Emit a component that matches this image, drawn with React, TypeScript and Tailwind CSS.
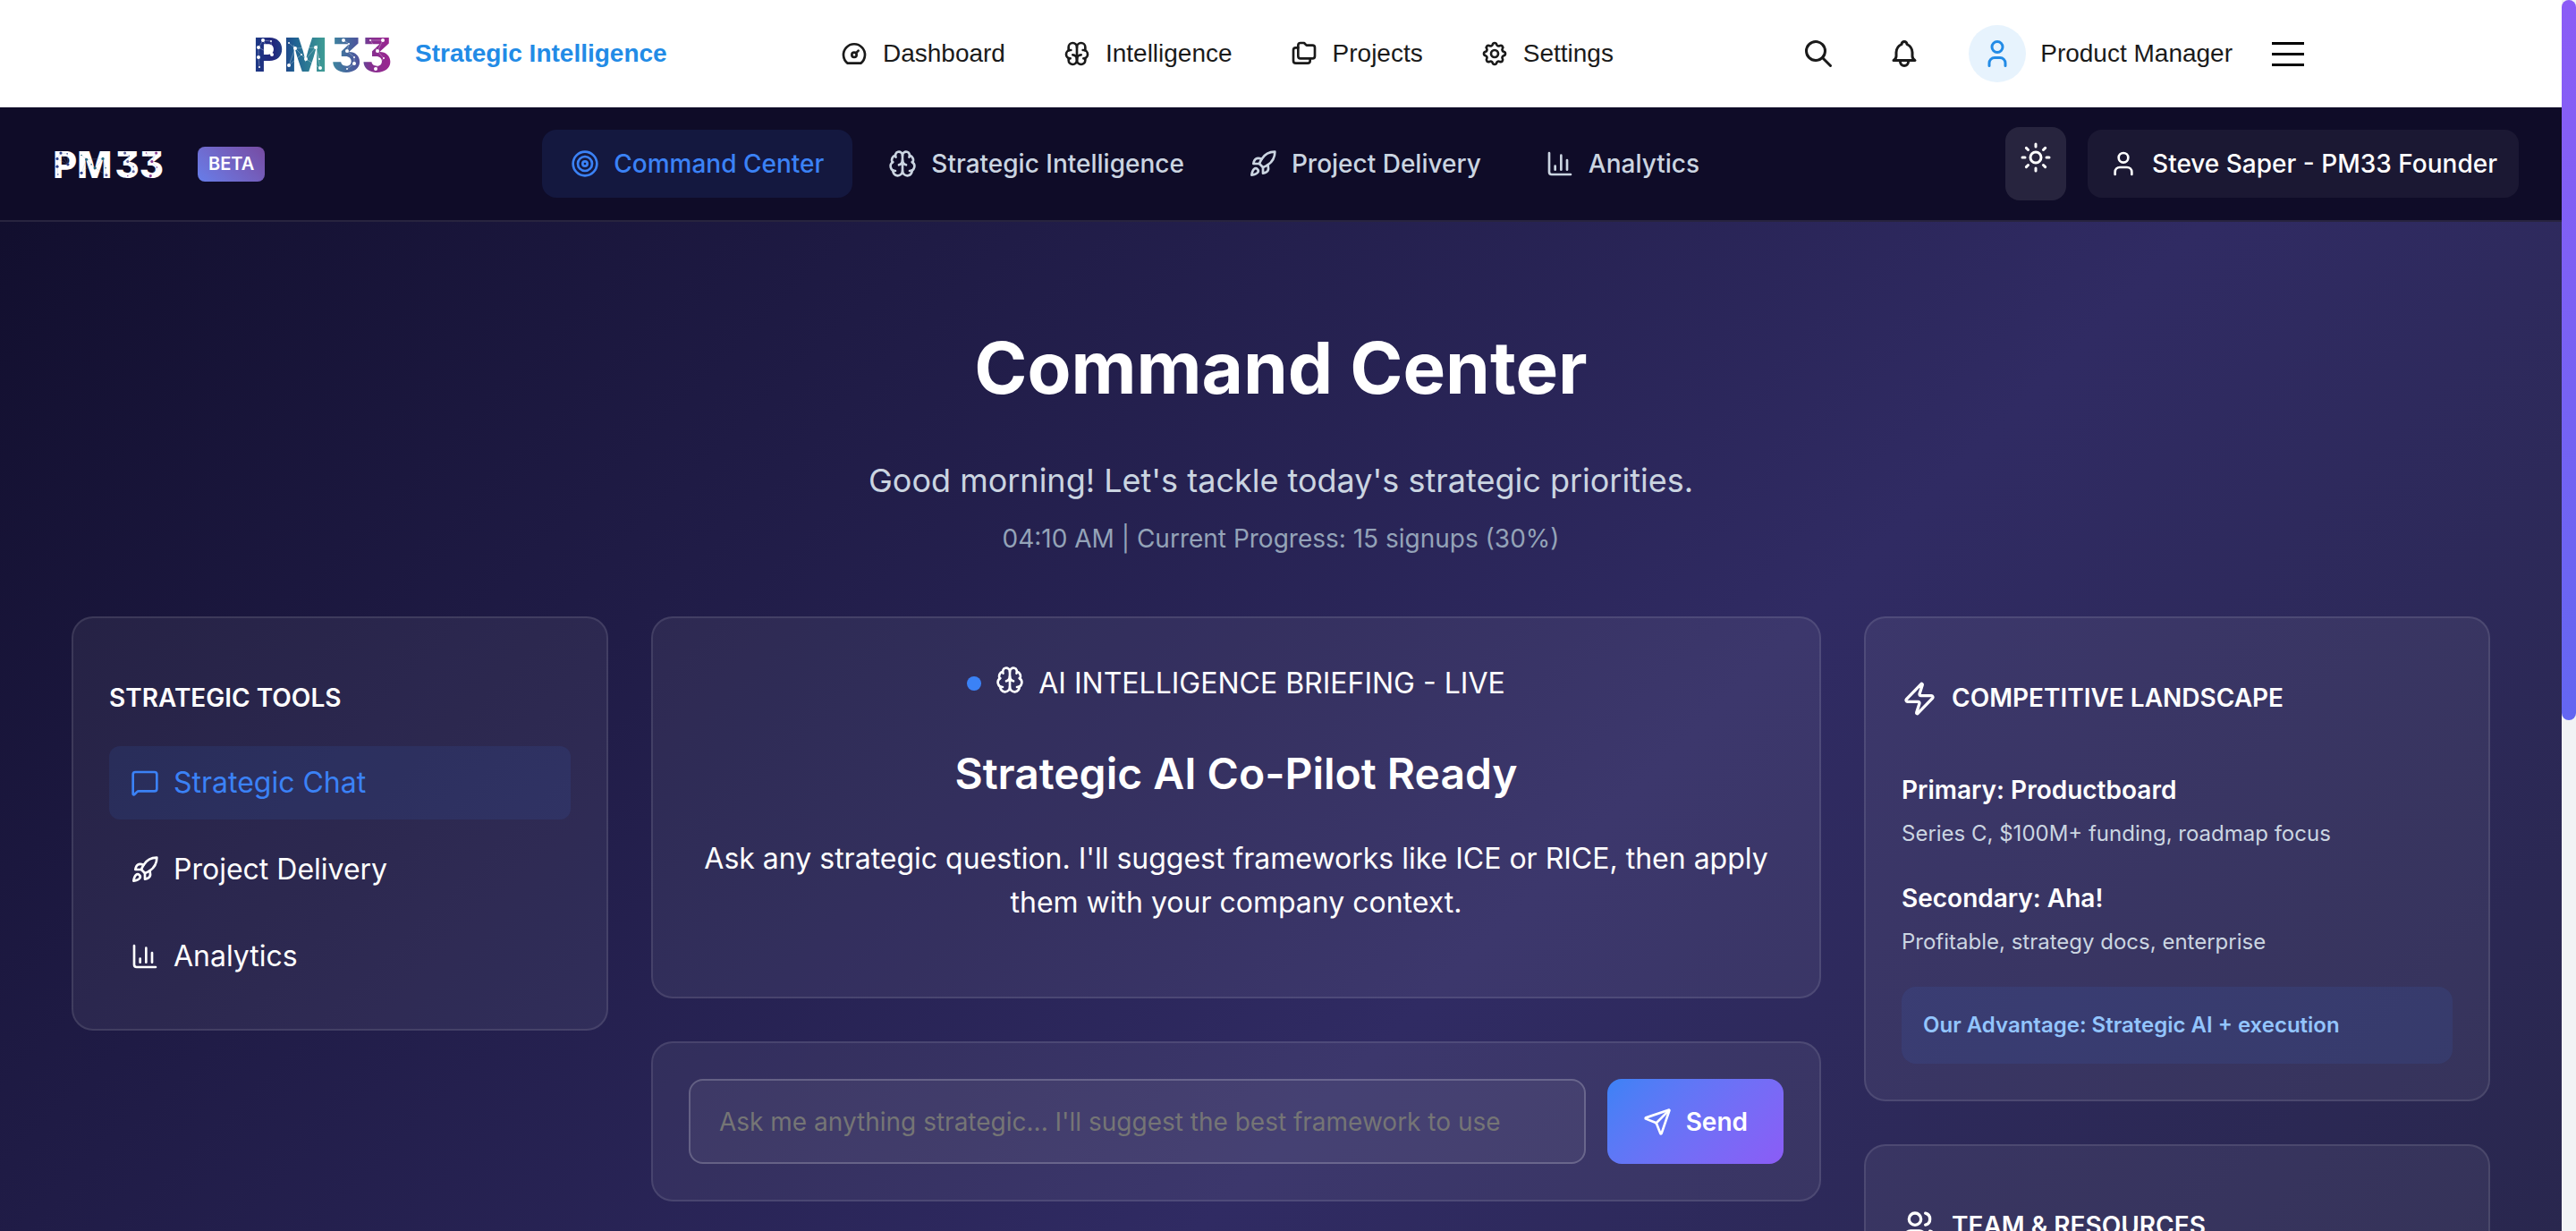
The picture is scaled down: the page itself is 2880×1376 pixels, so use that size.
import { TbBell, TbBrain, TbDashboard, TbFolders, TbSearch, TbSettings, TbUser } from "react-icons/tb";
import { Brain, ChartColumn, MessageSquare, Rocket, Send, Sun, Target, User, Users, Zap } from "lucide-react";

type Palette = { id: string; stops: [string, string][]; line: string; dots: string[] };

const brandPalette: Palette = {
  id: "brand",
  stops: [["0", "#1c3a86"], ["0.14", "#22267c"], ["0.3", "#1f6193"], ["0.52", "#3f9c95"], ["0.6", "#3f7f9f"], ["0.76", "#4c559c"], ["0.86", "#85308f"], ["1", "#9b2590"]],
  line: "#ffffff",
  dots: ["#ffffff"],
};

const whitePalette: Palette = {
  id: "white",
  stops: [["0", "#ffffff"], ["1", "#ffffff"]],
  line: "#8fa3c4",
  dots: ["#2b3f8c", "#22687f", "#5a5f9c", "#8a3a94"],
};

const nodes: [number, number, number][] = [
  [10, 10, 2], [5, 18, 2], [19, 11, 1], [20, 26, 2], [5, 29, 2], [6, 40, 1], [39, 38, 2], [39, 13, 1],
  [46, 19, 2], [53, 26, 1], [58, 31, 2], [69, 18, 2], [73, 31, 1], [74, 41, 2], [100, 10, 2], [106, 14, 1],
  [104, 22, 2], [112, 29, 1], [112, 36, 2], [104, 42, 1], [130, 10, 1], [144, 10, 2], [138, 22, 2], [145, 30, 1], [136, 42, 2],
];

const links: [number, number][] = [
  [0, 1], [0, 2], [1, 4], [1, 3], [4, 5], [2, 3], [0, 3], [6, 8], [7, 8], [8, 9], [6, 9], [9, 10], [10, 11], [11, 12],
  [11, 13], [10, 13], [8, 11], [14, 15], [15, 16], [16, 17], [17, 18], [18, 19], [20, 21], [21, 22], [22, 23], [23, 24], [20, 22],
];

function Logo({ palette, className }: { palette: Palette; className: string }) {
  return (
    <svg viewBox="0 0 152 50" className={`overflow-visible ${className}`} role="img" aria-label="PM 33">
      <defs>
        <linearGradient id={palette.id} gradientUnits="userSpaceOnUse" x1="0" y1="0" x2="152" y2="0">
          {palette.stops.map(([offset, color]) => (
            <stop key={offset} offset={offset} stopColor={color} />
          ))}
        </linearGradient>
      </defs>
      <g fill={`url(#${palette.id})`} className="font-[Inter] text-[52px] font-extrabold [font-feature-settings:'cv09']">
        <text x="-1" y="45">PM</text>
        <text x="86" y="45">33</text>
      </g>
      <g stroke={palette.line} strokeWidth="0.5" opacity="0.6">
        {links.map(([a, b]) => (
          <line key={`${a}-${b}`} x1={nodes[a][0]} y1={nodes[a][1]} x2={nodes[b][0]} y2={nodes[b][1]} />
        ))}
      </g>
      {nodes.map(([x, y, r], i) => (
        <circle key={i} cx={x} cy={y} r={r} fill={palette.dots[Math.floor((i * palette.dots.length) / nodes.length)]} />
      ))}
    </svg>
  );
}

const topLinks = [
  { label: "Dashboard", Icon: TbDashboard },
  { label: "Intelligence", Icon: TbBrain },
  { label: "Projects", Icon: TbFolders },
  { label: "Settings", Icon: TbSettings },
];

const tabs = [
  { label: "Command Center", Icon: Target, active: true },
  { label: "Strategic Intelligence", Icon: Brain, active: false },
  { label: "Project Delivery", Icon: Rocket, active: false },
  { label: "Analytics", Icon: ChartColumn, active: false },
];

const tools = [
  { label: "Strategic Chat", Icon: MessageSquare, active: true },
  { label: "Project Delivery", Icon: Rocket, active: false },
  { label: "Analytics", Icon: ChartColumn, active: false },
];

const competitors = [
  { name: "Primary: Productboard", note: "Series C, $100M+ funding, roadmap focus" },
  { name: "Secondary: Aha!", note: "Profitable, strategy docs, enterprise" },
];

const card = "rounded-3xl border-2 border-white/10 bg-white/[0.06] p-10";

function TopHeader() {
  return (
    <header className="bg-white font-['Liberation_Sans',Arial,sans-serif] text-[28px] leading-[44px] text-[#1a1a1a]">
      <div className="mx-auto flex h-[120px] max-w-[2296px] items-center justify-between">
        <a href="#" className="flex items-center gap-7 font-bold text-[#228be6]">
          <Logo palette={brandPalette} className="h-[50px] w-[152px]" />
          Strategic Intelligence
        </a>
        <nav className="flex items-center gap-16">
          {topLinks.map(({ label, Icon }) => (
            <a key={label} href="#" className="flex items-center gap-4">
              <Icon className="size-8" />
              {label}
            </a>
          ))}
        </nav>
        <div className="flex items-center">
          <button aria-label="Search" className="mr-[42px] px-[18px]"><TbSearch className="size-9" /></button>
          <button aria-label="Notifications" className="mr-[54px]"><TbBell className="size-9" /></button>
          <button className="mr-10 flex items-center gap-4">
            <span className="flex size-16 items-center justify-center rounded-full bg-[#e7f3fd] text-[#228be6]">
              <TbUser className="size-9" />
            </span>
            Product Manager
          </button>
          <button aria-label="Menu" className="flex w-11 flex-col gap-[9px] px-1">
            <span className="h-[3px] bg-black" />
            <span className="h-[3px] bg-black" />
            <span className="h-[3px] bg-black" />
          </button>
        </div>
      </div>
    </header>
  );
}

function TabBar() {
  return (
    <div className="flex h-32 items-center justify-between border-b-2 border-[#28243f] bg-[#0f0c28] px-12 text-[28px] leading-[44px] font-medium">
      <a href="#" className="flex items-center gap-10 pl-3">
        <Logo palette={whitePalette} className="h-10 w-[121px]" />
        <span className="rounded-lg bg-linear-45 from-[#667eea] to-[#764ba2] px-3 py-1 text-[20px] leading-[31px] font-semibold text-white">BETA</span>
      </a>
      <nav className="flex gap-2">
        {tabs.map(({ label, Icon, active }) => (
          <a
            key={label}
            href="#"
            className={`flex items-center gap-4 rounded-2xl px-8 py-4 ${active ? "bg-[#14183f] text-[#3b82f6]" : "text-[#cbd5e1]"}`}
          >
            <Icon className="size-8" />
            {label}
          </a>
        ))}
      </nav>
      <div className="flex items-center gap-6">
        <button aria-label="Toggle theme" className="flex h-[82px] rounded-2xl bg-white/10 p-4">
          <Sun className="size-9" />
        </button>
        <button className="flex items-center gap-4 rounded-2xl bg-white/5 px-6 py-4">
          <User className="size-8" />
          Steve Saper - PM33 Founder
        </button>
      </div>
    </div>
  );
}

export default function App() {
  return (
    <div className="flex h-screen overflow-hidden font-[Inter,sans-serif] text-white">
      <div className="flex-1 overflow-hidden bg-[linear-gradient(135deg,#0f0c29_0%,#302b63_50%,#24243e_100%)] bg-[length:100%_2560px] bg-no-repeat">
        <TopHeader />
        <TabBar />
        <main className="px-20 pt-[103px]">
          <div className="text-center">
            <h1 className="text-[80px] leading-[120px] font-bold">Command Center</h1>
            <p className="mt-10 text-[36px] leading-[52px] text-[#cbd5e1]">Good morning! Let's tackle today's strategic priorities.</p>
            <p className="mt-[18px] text-[28px] leading-[43px] text-[#94a3b8]">04:10 AM | Current Progress: 15 signups (30%)</p>
          </div>

          <div className="mt-[65px] grid grid-cols-[600px_1fr_700px] items-start gap-12">
            <aside className={card}>
              <h2 className="mt-7 mb-8 text-[28px] leading-[43px] font-semibold">STRATEGIC TOOLS</h2>
              <nav className="flex flex-col gap-[15px]">
                {tools.map(({ label, Icon, active }) => (
                  <a
                    key={label}
                    href="#"
                    className={`flex items-center gap-4 rounded-xl px-6 py-4 text-[32px] leading-[50px] ${active ? "bg-[#3b82f6]/10 text-[#3b82f6]" : ""}`}
                  >
                    <Icon className="size-8" />
                    {label}
                  </a>
                ))}
              </nav>
            </aside>

            <div className="flex flex-col gap-12">
              <section className={`${card} text-center`}>
                <div className="mt-2 flex items-center justify-center gap-4 text-[32px] leading-[50px]">
                  <span className="size-4 rounded-full bg-[#3b82f6]" />
                  <Brain className="mb-2 size-8" />
                  AI INTELLIGENCE BRIEFING - LIVE
                </div>
                <h2 className="mt-11 text-[48px] leading-[64px] font-semibold">Strategic AI Co-Pilot Ready</h2>
                <p className="mt-[38px] mb-[41px] text-[32px] leading-[49px]">
                  Ask any strategic question. I'll suggest frameworks like ICE or RICE, then apply them with your company context.
                </p>
              </section>
              <form className={`${card} flex gap-6`}>
                <input
                  aria-label="Strategic question"
                  placeholder="Ask me anything strategic... I'll suggest the best framework to use"
                  className="h-[95px] min-w-0 flex-1 rounded-2xl border-2 border-white/20 bg-white/5 px-8 text-[28px] placeholder:text-[#757575]"
                />
                <button type="button" className="flex items-center gap-4 rounded-2xl bg-linear-135 from-[#3b82f6] to-[#8b5cf6] px-10 text-[28px] font-semibold">
                  <Send className="size-8" />
                  Send
                </button>
              </form>
            </div>

            <div className="flex flex-col gap-12">
              <section className={card}>
                <h2 className="mt-7 mb-[59px] flex items-center gap-4 text-[28px] leading-[43px] font-semibold">
                  <Zap className="size-10" />
                  COMPETITIVE LANDSCAPE
                </h2>
                {competitors.map(({ name, note }) => (
                  <div key={name} className="mb-8">
                    <h3 className="mb-2 text-[28px] leading-[44px] font-semibold">{name}</h3>
                    <p className="text-[24px] leading-[37px] text-[#cbd5e1]">{note}</p>
                  </div>
                ))}
                <p className="rounded-2xl bg-[#3b82f6]/10 p-6 text-[24px] leading-[38px] font-semibold text-[#93c5fd]">
                  Our Advantage: Strategic AI + execution
                </p>
              </section>
              <section className={card}>
                <h2 className="mt-7 mb-[59px] flex items-center gap-4 text-[28px] leading-[43px] font-semibold">
                  <Users className="size-10" />
                  TEAM &amp; RESOURCES
                </h2>
              </section>
            </div>
          </div>
        </main>
      </div>
      <div className="w-4 bg-[#f1f3f5]">
        <div className="h-[58.5%] rounded-full bg-linear-to-b from-[#8b5cf6] to-[#6366f1]" />
      </div>
    </div>
  );
}
